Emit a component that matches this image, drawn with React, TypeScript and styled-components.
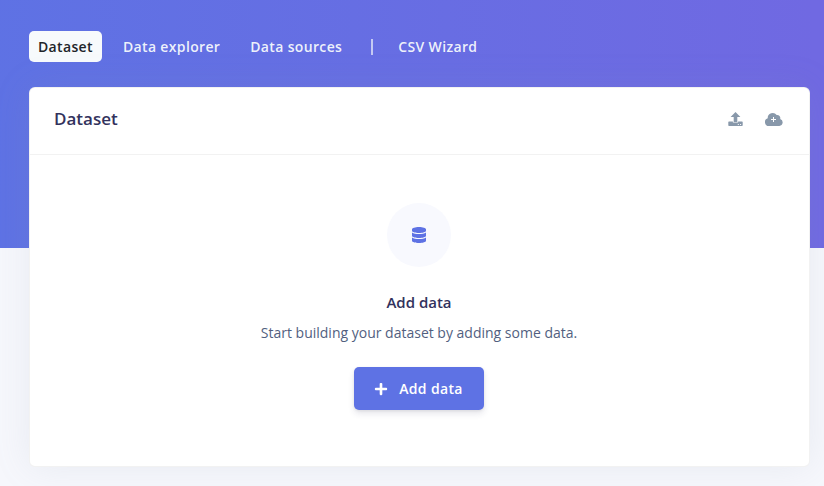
import React from "react";
import styled, { createGlobalStyle } from "styled-components";
import { FaDatabase, FaPlus } from "react-icons/fa";

const GlobalStyle = createGlobalStyle`
  *, *::before, *::after { box-sizing: border-box; }
  html, body { margin: 0; height: 100%; overflow: hidden; }
  body {
    font-family: "Open Sans", "Noto Sans", sans-serif;
    font-size: 14px;
    color: #525f7f;
    -webkit-font-smoothing: antialiased;
  }
`;

const Page = styled.div`
  height: 486px;
  padding: 31px 14px 19px 29px;
  display: flex;
  flex-direction: column;
  gap: 25px;
  overflow: hidden;
  background:
    linear-gradient(87deg, #5e72e4 0, #7069e2 824px) top / 100% 248px no-repeat,
    #f6f7fc;
`;

const Nav = styled.nav`
  height: 31px;
  display: flex;
  align-items: center;
`;

const Tab = styled.a<{ $active?: boolean }>`
  height: 31px;
  line-height: 31px;
  padding: 0 9px;
  margin-right: 12px;
  border-radius: 5px;
  font-size: 14px;
  font-weight: 600;
  letter-spacing: 0.35px;
  white-space: nowrap;
  color: ${(p) => (p.$active ? "#212529" : "rgba(247, 250, 252, 0.95)")};
  background: ${(p) => (p.$active ? "#f7fafc" : "transparent")};
`;

const Divider = styled.span`
  width: 2px;
  height: 16px;
  margin: 0 16px 0 8px;
  background: rgba(247, 250, 252, 0.65);
`;

const Card = styled.section`
  height: 380px;
  display: flex;
  flex-direction: column;
  border: 1px solid rgba(0, 0, 0, 0.05);
  border-radius: 6px;
  background: #fff;
  background-clip: border-box;
  box-shadow: 0 0 36px 0 rgba(136, 152, 170, 0.13);
`;

const CardHeader = styled.header`
  height: 67px;
  flex: none;
  padding: 0 26px 4px 24px;
  display: flex;
  align-items: center;
  justify-content: space-between;
  border-bottom: 1px solid rgba(0, 0, 0, 0.05);
`;

const Title = styled.h3`
  margin: 0;
  font-size: 17px;
  line-height: 24px;
  padding-bottom: 1px;
  font-weight: 600;
  color: #32325d;
`;

const Actions = styled.div`
  display: flex;
  align-items: flex-end;
  gap: 22px;
  color: #8898aa;
  svg { display: block; }
`;

const EmptyState = styled.div`
  flex: 1;
  padding: 48px 1px 0 0;
  display: flex;
  flex-direction: column;
  align-items: center;
`;

const IconCircle = styled.div`
  width: 64px;
  height: 64px;
  border-radius: 50%;
  display: flex;
  align-items: center;
  justify-content: center;
  background: #f8f9fe;
  color: #5e72e4;
`;

const Heading = styled.h4`
  margin: 24px 0 0;
  font-size: 15px;
  line-height: 22px;
  font-weight: 600;
  color: #32325d;
`;

const Description = styled.p`
  margin: 9px 0 0;
  line-height: 21px;
  font-size: 14px;
`;

const AddButton = styled.button`
  width: 130px;
  height: 43px;
  margin-top: 24px;
  padding: 0 1px 0 0;
  display: flex;
  align-items: center;
  justify-content: center;
  gap: 11px;
  border: 0;
  border-radius: 5px;
  background: #5e72e4;
  color: #fff;
  font: 600 14px "Open Sans", sans-serif;
  letter-spacing: 0.35px;
  box-shadow: 0 4px 6px rgba(50, 50, 93, 0.11), 0 1px 3px rgba(0, 0, 0, 0.08);
`;

const UploadIcon = () => (
  <svg width="15" height="15" viewBox="0 0 15 15" fill="currentColor">
    <path d="M7.5 0 L12.4 5 H9.3 V10 H5.7 V5 H2.6 Z" />
    <path
      fillRule="evenodd"
      d="M1 9.4 H4.9 V10.6 H10.1 V9.4 H14 Q14.7 9.4 14.7 10.1 V13.3 Q14.7 14 14 14 H1 Q.3 14 .3 13.3 V10.1 Q.3 9.4 1 9.4 Z M9.8 12 V13 H10.8 V12 Z M12.1 12 V13 H13.1 V12 Z"
    />
  </svg>
);

const CloudPlusIcon = () => (
  <svg width="18" height="14" viewBox="0 0 18 14">
    <path
      fill="currentColor"
      d="M4 13 A4 4 0 0 1 2.7 5.2 A5 5 0 0 1 11.7 2.1 A3.1 3.1 0 0 1 15.2 6 A3.6 3.6 0 0 1 14.3 13 Z"
    />
    <path d="M8.5 4 V9 M6 6.5 H11" stroke="#fff" strokeWidth="1" />
  </svg>
);

export default function App() {
  return (
    <>
      <GlobalStyle />
      <Page>
        <Nav>
          <Tab $active>Dataset</Tab>
          <Tab>Data explorer</Tab>
          <Tab>Data sources</Tab>
          <Divider />
          <Tab>CSV Wizard</Tab>
        </Nav>
        <Card>
          <CardHeader>
            <Title>Dataset</Title>
            <Actions>
              <UploadIcon />
              <CloudPlusIcon />
            </Actions>
          </CardHeader>
          <EmptyState>
            <IconCircle>
              <FaDatabase size={16} />
            </IconCircle>
            <Heading>Add data</Heading>
            <Description>Start building your dataset by adding some data.</Description>
            <AddButton>
              <FaPlus size={14} />
              Add data
            </AddButton>
          </EmptyState>
        </Card>
      </Page>
    </>
  );
}
